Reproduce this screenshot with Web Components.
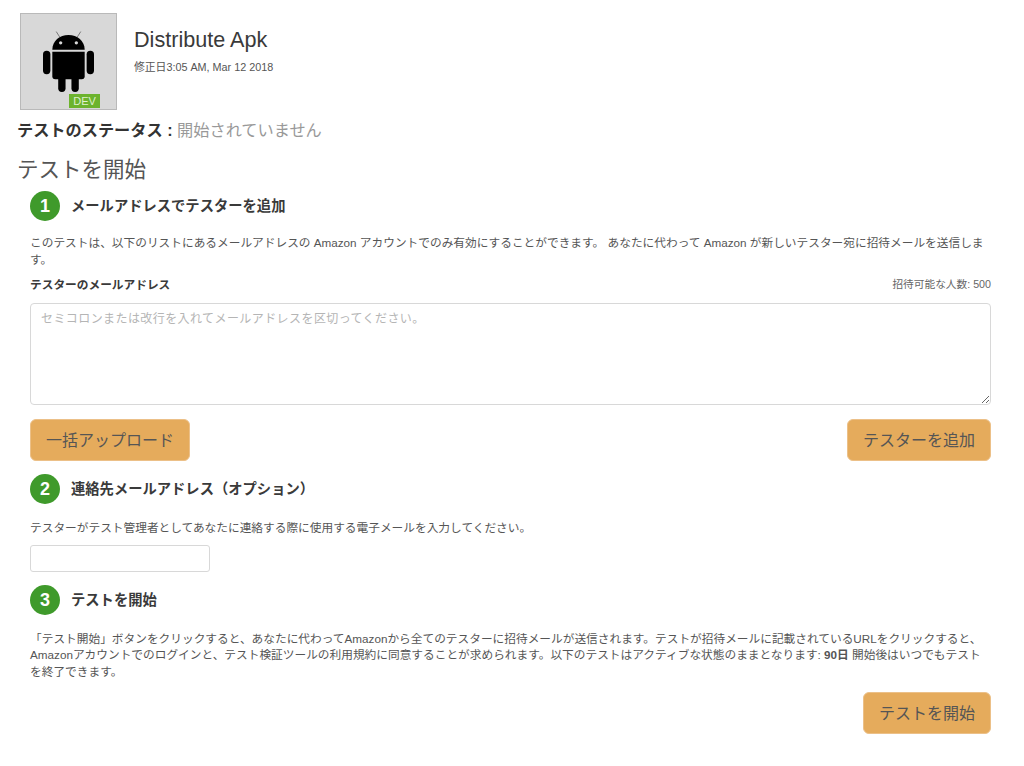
<!DOCTYPE html>
<html lang="ja">
<head>
<meta charset="utf-8">
<title>Distribute Apk</title>
<style>
  html, body { margin: 0; background: #fff; }
  body {
    font-family: "Liberation Sans", "Noto Sans CJK JP", sans-serif;
    color: #333;
  }
</style>
</head>
<body>
<distribute-page>
  <app-header title-text="Distribute Apk" modified="修正日3:05 AM, Mar 12 2018" badge="DEV"></app-header>
  <test-status label="テストのステータス :" value="開始されていません"></test-status>
  <section-title>テストを開始</section-title>

  <step-block number="1" heading="メールアドレスでテスターを追加" gap="14">
    <help-text>このテストは、以下のリストにあるメールアドレスの Amazon アカウントでのみ有効にすることができます。 あなたに代わって Amazon が新しいテスター宛に招待メールを送信します。</help-text>
    <tester-field label="テスターのメールアドレス" quota="招待可能な人数: 500" placeholder="セミコロンまたは改行を入れてメールアドレスを区切ってください。"></tester-field>
    <button-row>
      <action-button>一括アップロード</action-button>
      <action-button>テスターを追加</action-button>
    </button-row>
  </step-block>

  <step-block number="2" heading="連絡先メールアドレス（オプション）" gap="16">
    <help-text>テスターがテスト管理者としてあなたに連絡する際に使用する電子メールを入力してください。</help-text>
    <contact-input></contact-input>
  </step-block>

  <step-block number="3" heading="テストを開始" gap="16">
    <help-text>「テスト開始」ボタンをクリックすると、あなたに代わってAmazonから全てのテスターに招待メールが送信されます。テストが招待メールに記載されているURLをクリックすると、Amazonアカウントでのログインと、テスト検証ツールの利用規約に同意することが求められます。以下のテストはアクティブな状態のままとなります: <b>90日</b> 開始後はいつでもテストを終了できます。</help-text>
    <button-row end>
      <action-button>テストを開始</action-button>
    </button-row>
  </step-block>
</distribute-page>

<script>
  (function () {
    "use strict";

    // 共通の登録処理
    function define(name, css, html) {
      customElements.define(
        name,
        class extends HTMLElement {
          constructor() {
            super();
            this.attachShadow({ mode: "open" });
          }
          connectedCallback() {
            const attr = (key) => this.getAttribute(key) || "";
            this.shadowRoot.innerHTML = `<style>${css}</style>${html(attr)}`;
          }
        }
      );
    }

    define(
      "distribute-page",
      `:host { display: block; padding: 13px 33px 0 17px; }`,
      () => `<slot></slot>`
    );

    define(
      "app-header",
      `
        :host { display: flex; padding-left: 3px; gap: 17px; }
        .icon {
          position: relative;
          box-sizing: border-box;
          width: 97px; height: 97px;
          flex: none;
          background: #d8d8d8;
          border: 1.5px solid #b9b9b9;
          display: flex;
          justify-content: center;
        }
        svg { width: 51px; height: 61px; margin-top: 17px; margin-right: 1px; }
        .badge {
          position: absolute;
          right: 16px; bottom: 1px;
          width: 31px; height: 14px;
          background: #6cb32d;
          color: #dff0cf;
          font-size: 11px;
          line-height: 15px;
          text-align: center;
        }
        h1 { margin: 14px 0 0; font-size: 21.6px; font-weight: 400; line-height: 26px; color: #3a3a3a; }
        p { margin: 7px 0 0; font-size: 10.8px; line-height: 14px; color: #555; }
      `,
      (attr) => `
        <div class="icon">
          <svg viewBox="0 0 52 62" aria-hidden="true">
            <path d="M17 6 13.500 0.500M35 6 38.500 0.500" stroke="#777" stroke-width="1" fill="none"/>
            <path d="M9.500 19C9.500 10 17 4 26 4s16.500 6 16.500 15z" fill="#000"/>
            <circle cx="18" cy="12" r="1.700" fill="#d8d8d8"/>
            <circle cx="34" cy="12" r="1.700" fill="#d8d8d8"/>
            <path d="M9.500 21h33v25a3 3 0 0 1-3 3h-27a3 3 0 0 1-3-3z" fill="#000"/>
            <rect x="0" y="20" width="7.500" height="24" rx="3.700" fill="#000"/>
            <rect x="44.500" y="20" width="7.500" height="24" rx="3.700" fill="#000"/>
            <rect x="15.500" y="44" width="7.500" height="18" rx="3.700" fill="#000"/>
            <rect x="29" y="44" width="7.500" height="18" rx="3.700" fill="#000"/>
          </svg>
          <span class="badge">${attr("badge")}</span>
        </div>
        <div>
          <h1>${attr("title-text")}</h1>
          <p>${attr("modified")}</p>
        </div>
      `
    );

    define(
      "test-status",
      `
        :host { display: block; margin-top: 9px; font-size: 16.2px; line-height: 22px; }
        b { color: #333; }
        span { color: #999; }
      `,
      (attr) => `<b>${attr("label")}</b> <span>${attr("value")}</span>`
    );

    define(
      "section-title",
      `:host { display: block; margin: 16px 0 8px; font-size: 21.5px; line-height: 26px; color: #555; }`,
      () => `<slot></slot>`
    );

    define(
      "step-block",
      `
        :host { display: block; margin-left: 13px; }
        header { display: flex; align-items: center; gap: 11px; height: 30px; }
        .num {
          width: 30px; height: 30px;
          border-radius: 50%;
          background: #3f9a2b;
          color: #fff;
          font-size: 18px;
          font-weight: 700;
          line-height: 30px;
          text-align: center;
        }
        h3 { margin: 0 0 3px; font-size: 14.3px; font-weight: 700; color: #3a3a3a; }
      `,
      (attr) => `
        <header>
          <span class="num">${attr("number")}</span>
          <h3>${attr("heading")}</h3>
        </header>
        <div style="margin-top: ${attr("gap")}px"><slot></slot></div>
      `
    );

    define(
      "help-text",
      `:host { display: block; font-size: 11.7px; line-height: 16.500px; color: #555; }`,
      () => `<slot></slot>`
    );

    define(
      "tester-field",
      `
        :host { display: block; margin-top: 7px; }
        .top { display: flex; justify-content: space-between; align-items: center; height: 16px; }
        label { font-size: 11.7px; font-weight: 700; color: #3a3a3a; }
        small { font-size: 10.7px; color: #666; }
        textarea {
          display: block;
          box-sizing: border-box;
          width: 100%; height: 102px;
          margin-top: 12px;
          padding: 5px 10px;
          border: 1.5px solid #d8d8d8;
          border-radius: 4px;
          font: 12px "Liberation Sans", "Noto Sans CJK JP", sans-serif;
          outline: none;
        }
        textarea::placeholder { color: #b5b5b5; opacity: 1; letter-spacing: 0.42px; }
      `,
      (attr) => `
        <div class="top">
          <label>${attr("label")}</label>
          <small>${attr("quota")}</small>
        </div>
        <textarea placeholder="${attr("placeholder")}"></textarea>
      `
    );

    define(
      "button-row",
      `
        :host { display: flex; justify-content: space-between; margin-top: 14px; margin-bottom: 13px; }
        :host([end]) { justify-content: flex-end; margin-top: 12px; }
      `,
      () => `<slot></slot>`
    );

    define(
      "action-button",
      `
        :host { display: inline-block; }
        button {
          height: 42px;
          padding: 0 15px 2px;
          background: #e5ab5c;
          border: 1px solid #ecc088;
          border-radius: 6px;
          color: #555;
          font: 16px "Liberation Sans", "Noto Sans CJK JP", sans-serif;
        }
      `,
      () => `<button type="button"><slot></slot></button>`
    );

    define(
      "contact-input",
      `
        :host { display: block; margin: 8px 0 13px; }
        input {
          display: block;
          box-sizing: border-box;
          width: 180px; height: 27px;
          border: 1.5px solid #d8d8d8;
          border-radius: 3px;
          outline: none;
        }
      `,
      () => `<input type="text">`
    );
  })();
</script>
</body>
</html>
